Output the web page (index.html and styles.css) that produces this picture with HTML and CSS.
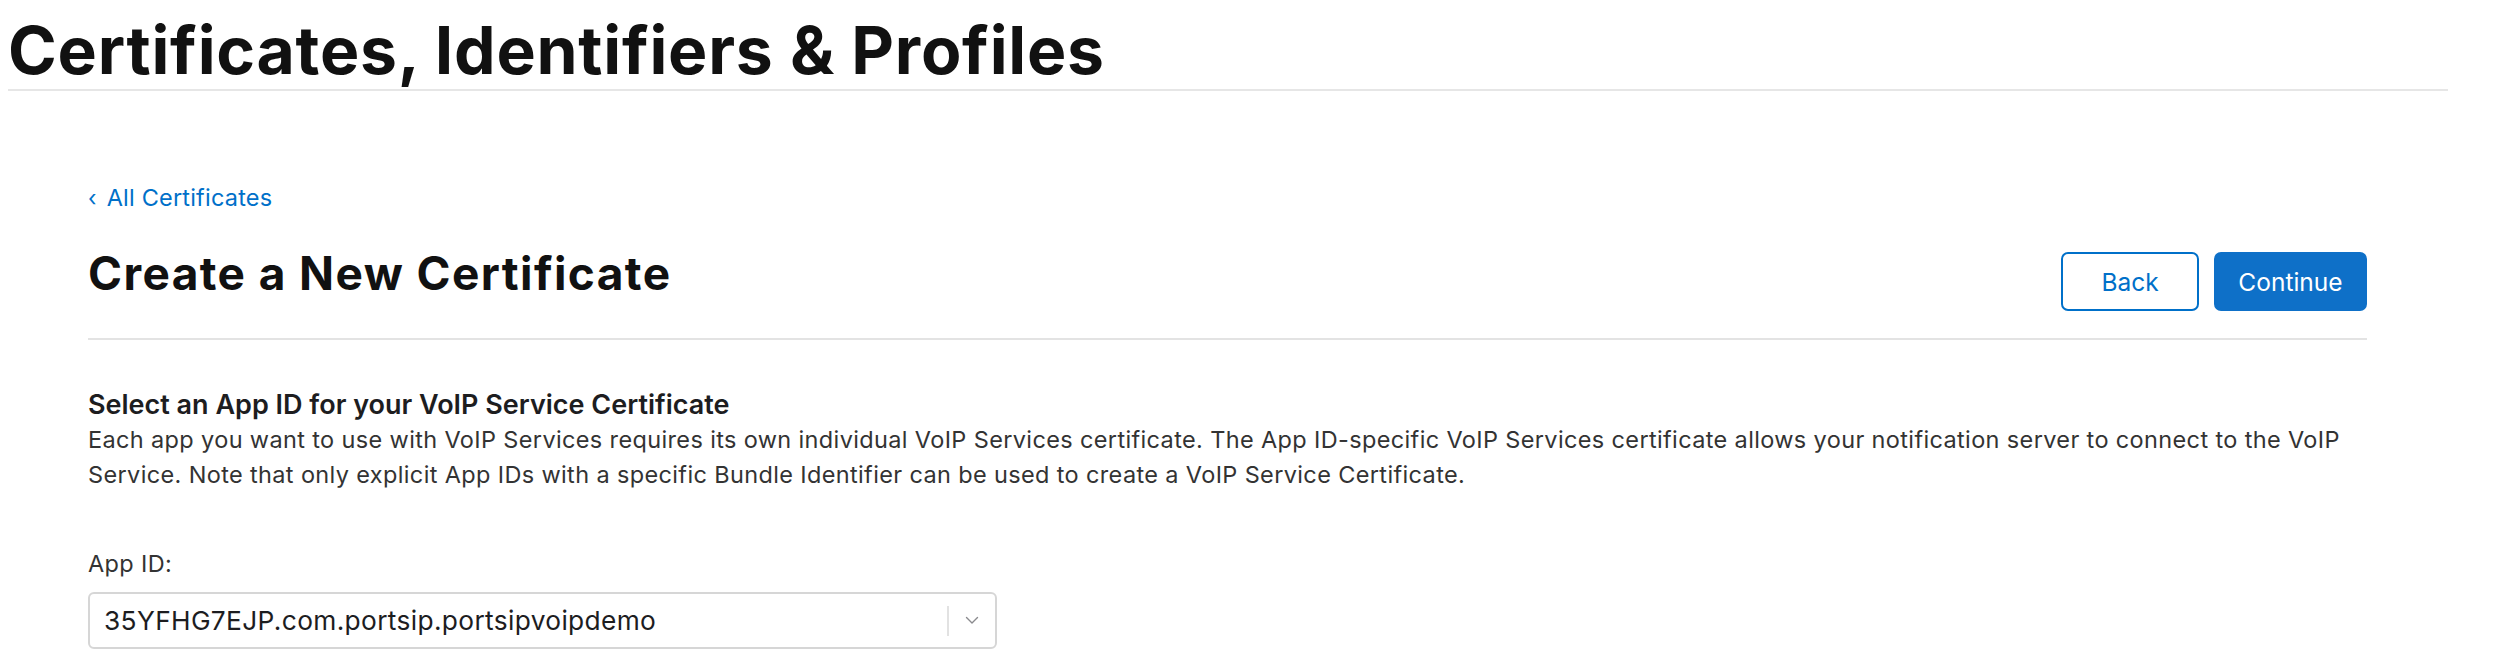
FILE: index.html
```html
<!DOCTYPE html>
<html lang="en">
<head>
<meta charset="utf-8">
<title>Certificates, Identifiers &amp; Profiles</title>
<link rel="stylesheet" href="styles.css">
</head>
<body>
<header class="page-header">
  <h1 class="page-title">Certificates, Identifiers &amp; Profiles</h1>
</header>
<main class="content">
  <a class="back-link" href="#"><span class="back-chevron">‹</span>All Certificates</a>
  <div class="title-row">
    <h2 class="section-title">Create a New Certificate</h2>
    <div class="actions">
      <button class="btn btn-secondary" type="button">Back</button>
      <button class="btn btn-primary" type="button">Continue</button>
    </div>
  </div>
  <section class="form-section">
    <h3 class="form-heading">Select an App ID for your VoIP Service Certificate</h3>
    <p class="form-desc">Each app you want to use with VoIP Services requires its own individual VoIP Services certificate. The App ID-specific VoIP Services certificate allows your notification server to connect to the VoIP Service. Note that only explicit App IDs with a specific Bundle Identifier can be used to create a VoIP Service Certificate.</p>
    <label class="field-label">App ID:</label>
    <div class="select">
      <span class="select-value">35YFHG7EJP.com.portsip.portsipvoipdemo</span>
      <span class="select-sep"></span>
      <span class="select-arrow">
        <svg width="14" height="9" viewBox="0 0 14 9"><path d="M1.5 1.5 L7 7 L12.5 1.5" fill="none" stroke="#8a8a8e" stroke-width="1.4" stroke-linecap="round" stroke-linejoin="round"/></svg>
      </span>
    </div>
  </section>
</main>
</body>
</html>
```

FILE: styles.css
```css
* { box-sizing: border-box; }
html, body { margin: 0; padding: 0; background: #fff; }
body {
  font-family: Inter, "Noto Sans", "Liberation Sans", sans-serif;
  color: #1d1d1f;
}
.page-header {
  margin-left: 8px;
  width: 2440px;
  padding-top: 18px;
  padding-bottom: 6px;
  border-bottom: 2px solid #e6e6e6;
}
.page-title {
  margin: 0;
  font-size: 66px;
  line-height: 65px;
  font-weight: 700;
  color: #111;
  letter-spacing: 0.75px;
}
.content {
  margin-left: 88px;
  width: 2279px;
}
.back-link {
  display: inline-flex;
  align-items: baseline;
  margin-top: 94px;
  font-size: 23.5px;
  line-height: 26px;
  color: #0070c9;
  text-decoration: none;
  letter-spacing: 0.2px;
}
.back-chevron {
  font-size: 22px;
  margin-right: 10px;
}
.title-row {
  display: flex;
  justify-content: space-between;
  align-items: flex-start;
  margin-top: 41px;
  padding-bottom: 27px;
  border-bottom: 2px solid #e3e3e3;
}
.section-title {
  margin: -2px 0 0 0;
  font-size: 46px;
  line-height: 46px;
  font-weight: 700;
  color: #111;
  letter-spacing: 1.4px;
}
.actions {
  display: flex;
  gap: 15px;
}
.btn {
  height: 59px;
  border-radius: 7px;
  font-family: inherit;
  font-size: 24.5px;
  padding: 0;
  cursor: pointer;
}
.btn-secondary {
  width: 138px;
  background: #fff;
  color: #0070c9;
  border: 2px solid #0070c9;
}
.btn-primary {
  width: 153px;
  background: #0e70c8;
  color: #fff;
  border: 2px solid #0e70c8;
}
.form-section { padding-top: 49px; }
.form-heading {
  margin: 0;
  font-size: 27px;
  line-height: 32px;
  font-weight: 600;
  color: #1d1d1f;
  letter-spacing: 0;
}
.form-desc {
  margin: 1px 0 0 0;
  font-size: 23.5px;
  line-height: 35px;
  color: #333;
  letter-spacing: 0.36px;
}
.field-label {
  display: block;
  margin-top: 54px;
  font-size: 23.5px;
  line-height: 35px;
  color: #333;
  letter-spacing: 0.36px;
}
.select {
  margin-top: 11px;
  width: 909px;
  height: 57px;
  border: 2px solid #d6d6d6;
  border-radius: 6px;
  display: flex;
  align-items: center;
  padding-left: 14px;
}
.select-value {
  flex: 1;
  font-size: 26.3px;
  color: #1d1d1f;
  letter-spacing: 0.35px;
}
.select-sep {
  width: 2px;
  height: 30px;
  background: #e2e2e2;
}
.select-arrow {
  width: 46px;
  display: flex;
  justify-content: center;
  align-items: center;
}
```
